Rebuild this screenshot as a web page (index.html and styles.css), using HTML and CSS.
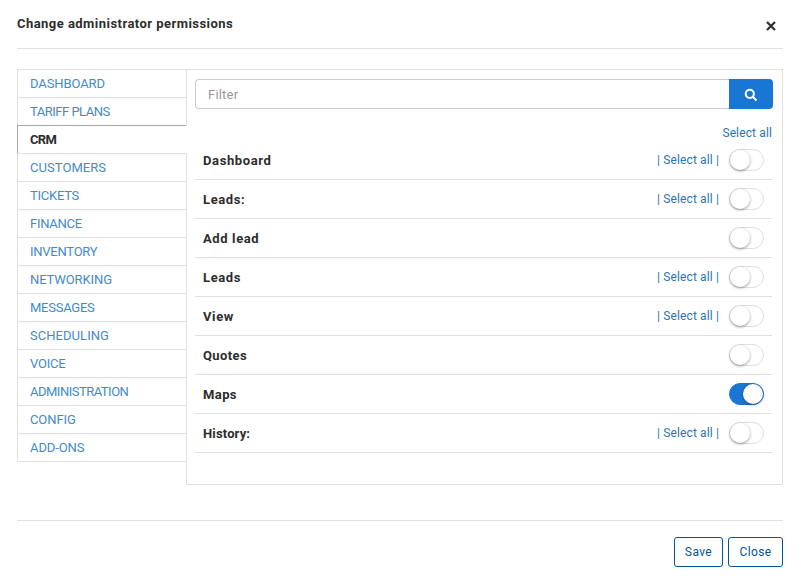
FILE: index.html
```html
<!DOCTYPE html>
<html lang="en">
<head>
<meta charset="utf-8">
<title>Change administrator permissions</title>
<link rel="stylesheet" href="styles.css">
</head>
<body>
<main class="modal">
  <header class="modal-header">
    <h1 class="title">Change administrator permissions</h1>
    <button class="dismiss" aria-label="Close dialog"><svg width="10" height="10" viewBox="0 0 10 10"><path d="M1 1 9 9M9 1 1 9"/></svg></button>
  </header>
  <section class="content">
    <nav class="tabs">
      <a class="tab">DASHBOARD</a>
      <a class="tab tightest">TARIFF PLANS</a>
      <a class="tab active">CRM</a>
      <a class="tab loose">CUSTOMERS</a>
      <a class="tab tight">TICKETS</a>
      <a class="tab tight">FINANCE</a>
      <a class="tab tight">INVENTORY</a>
      <a class="tab">NETWORKING</a>
      <a class="tab tight">MESSAGES</a>
      <a class="tab loose">SCHEDULING</a>
      <a class="tab tight">VOICE</a>
      <a class="tab tightest">ADMINISTRATION</a>
      <a class="tab">CONFIG</a>
      <a class="tab">ADD-ONS</a>
    </nav>
    <div class="panel">
      <div class="filter">
        <input class="filter-input" placeholder="Filter">
        <button class="search" aria-label="Search"><svg width="14" height="14" viewBox="0 0 14 14"><circle cx="5.8" cy="5.8" r="4.1"/><path d="M8.8 8.8 12.5 12.5"/></svg></button>
      </div>
      <div class="select-row"><a class="select">Select all</a></div>
      <div class="rows">
        <div class="row"><b class="name">Dashboard</b><a class="select">| Select all |</a><i class="switch"></i></div>
        <div class="row"><b class="name">Leads:</b><a class="select">| Select all |</a><i class="switch"></i></div>
        <div class="row"><b class="name">Add lead</b><i class="switch"></i></div>
        <div class="row"><b class="name">Leads</b><a class="select">| Select all |</a><i class="switch"></i></div>
        <div class="row"><b class="name">View</b><a class="select">| Select all |</a><i class="switch"></i></div>
        <div class="row"><b class="name narrow">Quotes</b><i class="switch"></i></div>
        <div class="row"><b class="name narrow">Maps</b><i class="switch on"></i></div>
        <div class="row"><b class="name narrower">History:</b><a class="select">| Select all |</a><i class="switch"></i></div>
      </div>
    </div>
  </section>
  <footer class="modal-footer">
    <button class="btn save">Save</button>
    <button class="btn close">Close</button>
  </footer>
</main>
</body>
</html>
```
FILE: styles.css
```css
* { box-sizing: border-box; }
body {
  margin: 0;
  background: #fff;
  color: #2d2d2d;
  font: 13px/18px Roboto, sans-serif;
}
button, input { font: inherit; letter-spacing: inherit; }
.modal { height: 579px; padding: 0 20px 0 17px; display: flex; flex-direction: column; }
.modal-header {
  height: 49px;
  border-bottom: 1px solid #e0e0e0;
  display: flex;
  justify-content: space-between;
}
.title { margin: 15px 0 0; font-size: 13px; line-height: 18px; font-weight: 700; letter-spacing: .46px; }
.dismiss { border: 0; background: none; padding: 0; width: 10px; height: 10px; margin: 21px 7px 0 0; }
.dismiss svg { display: block; stroke: #2d2d2d; stroke-width: 2.2; fill: none; }
.content { display: flex; align-items: flex-start; margin-top: 20px; height: 416px; }
.tabs { width: 170px; border-top: 1px solid #e0e0e0; margin-right: -1px; position: relative; z-index: 1; }
.tab {
  display: block;
  height: 28px;
  padding: 5px 12px 0;
  border: solid #e0e0e0;
  border-width: 0 1px 1px;
  color: #428bca;
  letter-spacing: -.1px;
}
.tab.loose { letter-spacing: .05px; }
.tab.tight { letter-spacing: -.25px; }
.tab.tightest { letter-spacing: -.5px; }
.tab.active {
  height: 29px;
  margin-top: -1px;
  padding-top: 5px;
  border-top: 1px solid #aaa;
  border-left-color: #aaa;
  border-right-color: #fff;
  background: #fff;
  color: #2d2d2d;
  font-weight: 700;
  letter-spacing: -.7px;
}
.panel { flex: 1; height: 416px; border: 1px solid #e0e0e0; padding: 9px 9px 0 8px; }
.filter { display: flex; height: 30px; }
.filter-input {
  flex: 1;
  min-width: 0;
  border: 1px solid #ccc;
  border-right: 0;
  border-radius: 4px 0 0 4px;
  padding: 2px 12px 0;
  letter-spacing: .2px;
}
.filter-input::placeholder { color: #999; }
.search {
  width: 44px;
  border: 0;
  border-radius: 0 4px 4px 0;
  background: #1976d2;
  display: flex;
  align-items: center;
  justify-content: center;
  padding: 2px 0 0;
}
.search svg { stroke: #fff; stroke-width: 2; fill: none; }
.select { color: #2b74b4; font-size: 12px; letter-spacing: .13px; }
.select-row { height: 32px; padding-top: 15px; margin-right: 1px; text-align: right; }
.rows { margin-right: 1px; }
.row {
  height: 39px;
  border-bottom: 1px solid #e0e0e0;
  display: flex;
  align-items: center;
  padding: 0 8px;
}
.name { flex: 1; font-size: 13px; letter-spacing: .62px; padding-top: 2px; }
.name.narrow { letter-spacing: .4px; }
.name.narrower { letter-spacing: .15px; }
.row .select { margin-right: 10px; }
.switch {
  width: 35px;
  height: 22px;
  border: 1px solid #dfdfdf;
  border-radius: 11px;
  display: flex;
}
.switch::before {
  content: "";
  width: 20px;
  height: 20px;
  border-radius: 50%;
  background: #fff;
  box-shadow: 0 1px 3px rgba(0, 0, 0, .4);
}
.switch.on { background: #1976d2; border-color: #1976d2; justify-content: flex-end; }
.modal-footer {
  margin-top: 35px;
  border-top: 1px solid #e0e0e0;
  padding-top: 16px;
  display: flex;
  justify-content: flex-end;
  gap: 5px;
}
.btn { height: 30px; padding: 0; border: 1px solid #00549b; border-radius: 3px; background: #fff; color: #00549b; letter-spacing: .4px; font-size: 12px; }
.save { width: 49px; }
.close { width: 55px; }
```
